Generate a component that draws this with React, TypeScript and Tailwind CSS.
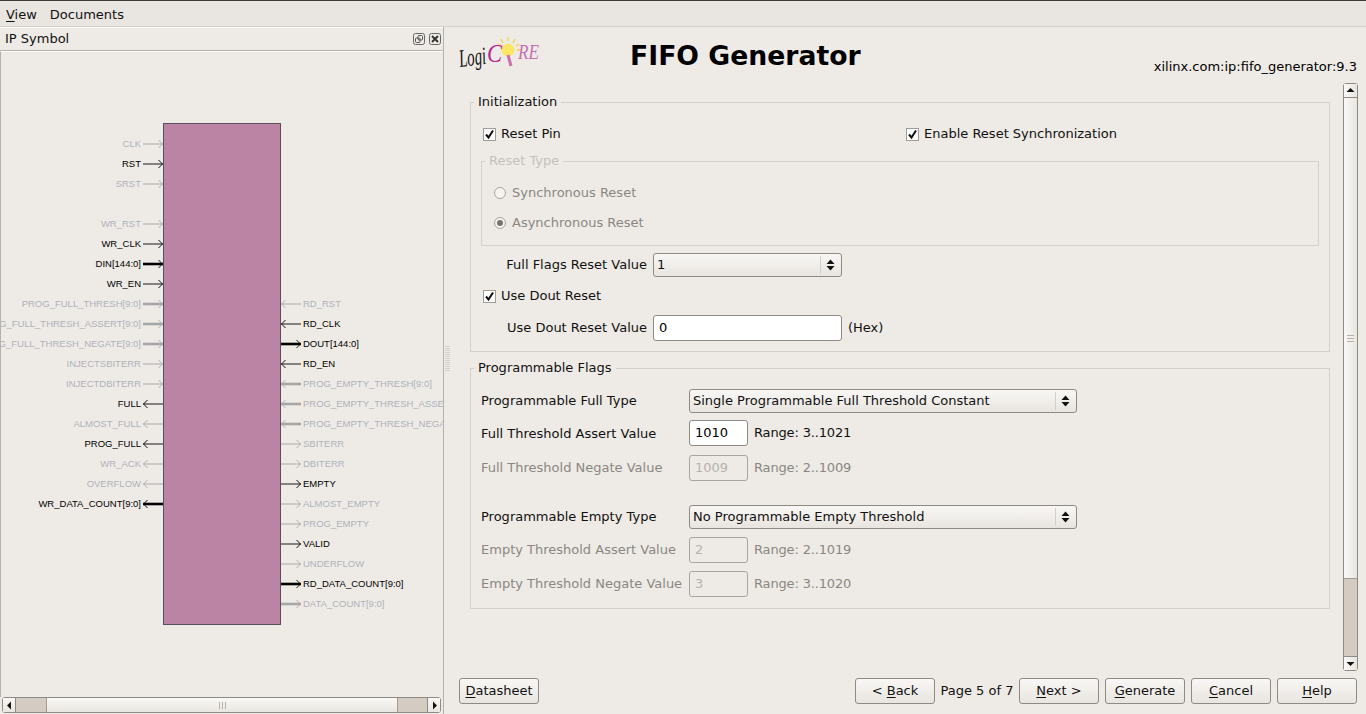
import type { ReactNode } from 'react'

type Pin = { name: string; on?: boolean; bus?: boolean; dir: 'in' | 'out' } | null

const LEFT_PINS: Pin[] = [
  { name: 'CLK', dir: 'in' },
  { name: 'RST', on: true, dir: 'in' },
  { name: 'SRST', dir: 'in' },
  null,
  { name: 'WR_RST', dir: 'in' },
  { name: 'WR_CLK', on: true, dir: 'in' },
  { name: 'DIN[144:0]', on: true, bus: true, dir: 'in' },
  { name: 'WR_EN', on: true, dir: 'in' },
  { name: 'PROG_FULL_THRESH[9:0]', bus: true, dir: 'in' },
  { name: 'PROG_FULL_THRESH_ASSERT[9:0]', bus: true, dir: 'in' },
  { name: 'PROG_FULL_THRESH_NEGATE[9:0]', bus: true, dir: 'in' },
  { name: 'INJECTSBITERR', dir: 'in' },
  { name: 'INJECTDBITERR', dir: 'in' },
  { name: 'FULL', on: true, dir: 'out' },
  { name: 'ALMOST_FULL', dir: 'out' },
  { name: 'PROG_FULL', on: true, dir: 'out' },
  { name: 'WR_ACK', dir: 'out' },
  { name: 'OVERFLOW', dir: 'out' },
  { name: 'WR_DATA_COUNT[9:0]', on: true, bus: true, dir: 'out' },
]

const RIGHT_PINS: Pin[] = [
  { name: 'RD_RST', dir: 'in' },
  { name: 'RD_CLK', on: true, dir: 'in' },
  { name: 'DOUT[144:0]', on: true, bus: true, dir: 'out' },
  { name: 'RD_EN', on: true, dir: 'in' },
  { name: 'PROG_EMPTY_THRESH[9:0]', bus: true, dir: 'in' },
  { name: 'PROG_EMPTY_THRESH_ASSERT[9:0]', bus: true, dir: 'in' },
  { name: 'PROG_EMPTY_THRESH_NEGATE[9:0]', bus: true, dir: 'in' },
  { name: 'SBITERR', dir: 'out' },
  { name: 'DBITERR', dir: 'out' },
  { name: 'EMPTY', on: true, dir: 'out' },
  { name: 'ALMOST_EMPTY', dir: 'out' },
  { name: 'PROG_EMPTY', dir: 'out' },
  { name: 'VALID', on: true, dir: 'out' },
  { name: 'UNDERFLOW', dir: 'out' },
  { name: 'RD_DATA_COUNT[9:0]', on: true, bus: true, dir: 'out' },
  { name: 'DATA_COUNT[9:0]', bus: true, dir: 'out' },
]

function PinArrow({ pin, side }: { pin: NonNullable<Pin>; side: 'left' | 'right' }) {
  const pointsRight = (side === 'left') === (pin.dir === 'in')
  const color = pin.on ? (pin.bus ? '#000000' : '#555555') : pin.bus ? '#a6a6a6' : '#bcbcbc'
  const head = pin.on ? '#111111' : '#b0b0b0'
  return (
    <svg width="20" height="10" viewBox="0 0 20 10" className="shrink-0">
      <line x1="0" y1="5" x2="20" y2="5" stroke={color} strokeWidth={pin.bus ? 2.6 : 1.4} />
      {pointsRight ? (
        <path d="M15.5 1 L19.5 5 L15.5 9" fill="none" stroke={head} strokeWidth="1" />
      ) : (
        <path d="M4.5 1 L0.5 5 L4.5 9" fill="none" stroke={head} strokeWidth="1" />
      )}
    </svg>
  )
}

function Symbol() {
  return (
    <div className="flex pt-[71px] font-['Liberation_Sans',sans-serif] text-[9.5px]">
      <div className="w-[162px] shrink-0 overflow-hidden pt-[11px]">
        {LEFT_PINS.map((pin, i) => (
          <div key={i} className="flex h-5 items-center justify-end">
            {pin && (
              <>
                <span className={`mr-[2px] whitespace-nowrap ${pin.on ? 'text-black' : 'text-[#aeb2b9]'}`}>{pin.name}</span>
                <PinArrow pin={pin} side="left" />
              </>
            )}
          </div>
        ))}
      </div>
      <div className="h-[502px] w-[118px] shrink-0 border border-[#55505a] bg-[#bb84a5]" />
      <div className="min-w-0 flex-1 overflow-hidden pt-[171px]">
        {RIGHT_PINS.map((pin, i) => (
          <div key={i} className="flex h-5 items-center">
            {pin && (
              <>
                <PinArrow pin={pin} side="right" />
                <span className={`ml-[2px] whitespace-nowrap ${pin.on ? 'text-black' : 'text-[#aeb2b9]'}`}>{pin.name}</span>
              </>
            )}
          </div>
        ))}
      </div>
    </div>
  )
}

function Triangle({ dir }: { dir: 'up' | 'down' | 'left' | 'right' }) {
  const d = {
    up: 'M0.5 6 L4.5 2 L8.5 6 Z',
    down: 'M0.5 3 L4.5 7 L8.5 3 Z',
    left: 'M6 0.5 L2 4.5 L6 8.5 Z',
    right: 'M3 0.5 L7 4.5 L3 8.5 Z',
  }[dir]
  return (
    <svg width="9" height="9" viewBox="0 0 9 9">
      <path d={d} fill="#111" />
    </svg>
  )
}

function HScrollbar() {
  return (
    <div className="mx-[2px] mb-[1px] flex h-4 w-[439px] shrink-0 rounded-[3px] border border-[#8f8a84] bg-[#d4ccc3]">
      <div className="flex w-[13px] items-center justify-center border-r border-[#8f8a84] bg-gradient-to-b from-[#faf9f7] to-[#e9e6e1]">
        <Triangle dir="left" />
      </div>
      <div className="ml-[30px] flex w-[352px] items-center justify-center gap-[2px] border-x border-[#a09b95] bg-gradient-to-b from-[#faf9f7] to-[#e9e6e1]">
        <span className="h-[7px] w-px bg-[#b5b1ab]" />
        <span className="h-[7px] w-px bg-[#b5b1ab]" />
        <span className="h-[7px] w-px bg-[#b5b1ab]" />
      </div>
      <div className="ml-auto flex w-[13px] items-center justify-center border-l border-[#8f8a84] bg-gradient-to-b from-[#faf9f7] to-[#e9e6e1]">
        <Triangle dir="right" />
      </div>
    </div>
  )
}

function VScrollbar() {
  return (
    <div className="mr-[9px] ml-[13px] flex h-[588px] w-[15px] shrink-0 flex-col rounded-[3px] border border-[#8f8a84] bg-[#d4ccc3]">
      <div className="flex h-[14px] items-center justify-center border-b border-[#8f8a84] bg-gradient-to-r from-[#faf9f7] to-[#e9e6e1]">
        <Triangle dir="up" />
      </div>
      <div className="flex h-[481px] flex-col items-center justify-center gap-[2px] border-b border-[#a09b95] bg-gradient-to-r from-[#faf9f7] to-[#e9e6e1]">
        <span className="h-px w-[7px] bg-[#b5b1ab]" />
        <span className="h-px w-[7px] bg-[#b5b1ab]" />
        <span className="h-px w-[7px] bg-[#b5b1ab]" />
      </div>
      <div className="mt-auto flex h-[14px] items-center justify-center border-t border-[#8f8a84] bg-gradient-to-r from-[#faf9f7] to-[#e9e6e1]">
        <Triangle dir="down" />
      </div>
    </div>
  )
}

function Checkbox({ label }: { label: string }) {
  return (
    <div className="flex h-5 items-center">
      <span className="flex h-[13px] w-[13px] items-center justify-center border border-[#a09c96] bg-white">
        <svg width="11" height="11" viewBox="0 0 11 11">
          <path d="M2 5.5 L4.5 8.5 L9 1.5" fill="none" stroke="#111" strokeWidth="2" />
        </svg>
      </span>
      <span className="ml-[5px]">{label}</span>
    </div>
  )
}

function Radio({ label, checked }: { label: string; checked?: boolean }) {
  return (
    <div className="flex h-5 items-center text-[#8a8782]">
      <span className="flex h-[12px] w-[12px] items-center justify-center rounded-full border border-[#a8a49e] bg-[#f6f4f1]">
        {checked && <span className="h-[6px] w-[6px] rounded-full bg-[#77746f]" />}
      </span>
      <span className="ml-[6px]">{label}</span>
    </div>
  )
}

function Combo({ value, className }: { value: string; className: string }) {
  return (
    <div className={`flex h-6 items-center rounded-[3px] border border-[#8f8a84] bg-gradient-to-b from-[#f9f7f5] to-[#e8e5e0] pl-[3px] ${className}`}>
      <span className="flex-1">{value}</span>
      <span className="h-[18px] w-px bg-[#d2cec8]" />
      <svg width="20" height="14" viewBox="0 0 20 14">
        <path d="M5.5 6 L9.5 1.5 L13.5 6 Z M5.5 8 L9.5 12.5 L13.5 8 Z" fill="#111" />
      </svg>
    </div>
  )
}

function TextBox({ value, disabled, className }: { value: string; disabled?: boolean; className: string }) {
  return (
    <div
      className={`flex h-[26px] items-center rounded-[3px] border pl-[5px] ${disabled ? 'border-[#a8a49e] bg-[#eeebe6] text-[#b5b2ad]' : 'border-[#8f8a84] bg-white text-black'} ${className}`}
    >
      {value}
    </div>
  )
}

function Group({ title, disabled, className, legendClass, children }: { title: string; disabled?: boolean; className?: string; legendClass: string; children: ReactNode }) {
  return (
    <fieldset className={`border border-[#d3d0ca] ${className ?? ''}`}>
      <legend className={`px-[4px] leading-[18px] ${legendClass} ${disabled ? 'text-[#c4c1bc]' : ''}`}>{title}</legend>
      {children}
    </fieldset>
  )
}

function ThresholdRow({ label, value, range, disabled, className }: { label: string; value: string; range: string; disabled?: boolean; className: string }) {
  return (
    <div className={`flex items-center ${className} ${disabled ? 'text-[#8a8782]' : ''}`}>
      <span className={`w-[208px] whitespace-nowrap ${disabled ? '' : 'pt-px'}`}>{label}</span>
      <TextBox value={value} disabled={disabled} className="w-[59px]" />
      <span className="ml-[6px] tracking-[-0.15px]">{range}</span>
    </div>
  )
}

function WizardButton({ mark, rest, before, className }: { mark: string; rest: string; before?: string; className?: string }) {
  return (
    <button className={`flex h-[26px] w-20 items-center justify-center rounded-[3px] border border-[#8f8a84] bg-gradient-to-b from-[#f9f7f5] to-[#e8e5e0] whitespace-pre ${className ?? ''}`}>
      {before}
      <span className="underline underline-offset-2">{mark}</span>
      {rest}
    </button>
  )
}

function Logo() {
  return (
    <svg width="84" height="38" viewBox="0 0 84 38" className="mt-[9px] ml-[8px] shrink-0">
      <path
        d="M50 1 L50 5 M43 3 L45 7 M57 3 L55 7 M40 8 L43 10 M61 8 L58 10 M63 14 L59 14"
        stroke="#f5d33c"
        strokeWidth="1.3"
      />
      <circle cx="50" cy="14" r="6.5" fill="#fbe765" />
      <path d="M50 19 L53 30" stroke="#cf6fb0" strokeWidth="3" />
      <text x="2" y="31" fontFamily="Liberation Serif, serif" fontStyle="italic" fontSize="25" fill="#111" textLength="27" lengthAdjust="spacingAndGlyphs" transform="rotate(-7 2 31)">Logi</text>
      <text x="29" y="26" fontFamily="Liberation Serif, serif" fontStyle="italic" fontSize="25" fill="#b8268f" textLength="15" lengthAdjust="spacingAndGlyphs">C</text>
      <text x="60" y="23" fontFamily="Liberation Serif, serif" fontStyle="italic" fontSize="21" fill="#c76fb5" textLength="21" lengthAdjust="spacingAndGlyphs">RE</text>
    </svg>
  )
}

export default function App() {
  return (
    <div className="flex h-[714px] w-[1366px] flex-col overflow-hidden border-t border-[#3c3c3c] bg-[#eeebe6] font-['DejaVu_Sans',sans-serif] text-[13px] text-[#111]">
      {/* Menu bar */}
      <div className="flex h-[26px] shrink-0 items-center gap-[13px] border-b border-[#d3d0ca] bg-[#e9e6e1] pt-[2px] pl-[6px]">
        <span><span className="underline underline-offset-2">V</span>iew</span>
        <span>Documents</span>
      </div>

      <div className="flex min-h-0 flex-1">
        {/* IP Symbol panel */}
        <div className="flex w-[444px] shrink-0 flex-col border-r border-[#b5b2ac]">
          <div className="flex h-[24px] shrink-0 items-center border-t border-b border-t-white border-b-[#b5b2ac] pr-[2px] pl-[5px]">
            <span className="flex-1">IP Symbol</span>
            <svg width="12" height="12" viewBox="0 0 12 12" className="mr-[4px]">
              <rect x="0.5" y="0.5" width="11" height="11" rx="2" fill="none" stroke="#666" />
              <rect x="5" y="2.5" width="4.5" height="4.5" rx="1" fill="none" stroke="#555" />
              <rect x="2.5" y="5" width="4.5" height="4.5" rx="1" fill="none" stroke="#555" />
            </svg>
            <svg width="12" height="12" viewBox="0 0 12 12">
              <rect x="0.5" y="0.5" width="11" height="11" rx="2" fill="none" stroke="#666" />
              <path d="M3 3 L9 9 M9 3 L3 9" stroke="#333" strokeWidth="2" />
            </svg>
          </div>
          <div className="min-h-0 flex-1 overflow-hidden border-t border-l border-t-white border-l-[#b5b2ac]">
            <Symbol />
          </div>
          <HScrollbar />
        </div>

        {/* Splitter */}
        <div className="flex w-[6px] shrink-0 flex-col items-center justify-center gap-px pb-[24px]">
          {Array.from({ length: 13 }, (_, i) => (
            <span key={i} className="h-px w-[5px] bg-[#d3d0ca]" />
          ))}
        </div>

        {/* Wizard page */}
        <div className="flex min-w-0 flex-1 flex-col">
          <div className="relative flex h-[56px] shrink-0">
            <Logo />
            <div className="ml-[88px] pt-[9px] text-[26.67px] leading-[40px] font-bold text-black">FIFO Generator</div>
            <div className="absolute right-[9px] bottom-[7px] text-black">xilinx.com:ip:fifo_generator:9.3</div>
          </div>

          <div className="flex">
            <div className="ml-[20px] w-[860px] shrink-0 pt-[10px]">
              <Group title="Initialization" legendClass="-ml-[7px]" className="px-[10px] pb-[10px]">
                <div className="flex pt-[13px] pl-[2px]">
                  <div className="w-[423px]"><Checkbox label="Reset Pin" /></div>
                  <Checkbox label="Enable Reset Synchronization" />
                </div>
                <Group title="Reset Type" legendClass="-ml-[9px]" disabled className="mt-[8px] px-[12px] pt-[13px] pb-[12px]">
                  <div className="flex flex-col gap-[10px]">
                    <Radio label="Synchronous Reset" />
                    <Radio label="Asynchronous Reset" checked />
                  </div>
                </Group>
                <div className="mt-[7px] flex items-center">
                  <span className="w-[172px] pr-[6px] text-right whitespace-nowrap">Full Flags Reset Value</span>
                  <Combo value="1" className="w-[189px]" />
                </div>
                <div className="mt-[9px] pl-[2px]"><Checkbox label="Use Dout Reset" /></div>
                <div className="mt-[9px] flex items-center">
                  <span className="w-[172px] pr-[6px] text-right whitespace-nowrap">Use Dout Reset Value</span>
                  <TextBox value="0" className="w-[189px]" />
                  <span className="ml-[6px]">(Hex)</span>
                </div>
              </Group>

              <Group title="Programmable Flags" legendClass="-ml-[7px]" className="mt-[7px] px-[10px] pb-[11px]">
                <div className="mt-[12px] flex items-center">
                  <span className="w-[208px]">Programmable Full Type</span>
                  <Combo value="Single Programmable Full Threshold Constant" className="w-[388px]" />
                </div>
                <ThresholdRow label="Full Threshold Assert Value" value="1010" range="Range: 3..1021" className="mt-[7px]" />
                <ThresholdRow label="Full Threshold Negate Value" value="1009" range="Range: 2..1009" disabled className="mt-[9px]" />
                <div className="mt-[24px] flex items-center">
                  <span className="w-[208px]">Programmable Empty Type</span>
                  <Combo value="No Programmable Empty Threshold" className="w-[388px]" />
                </div>
                <ThresholdRow label="Empty Threshold Assert Value" value="2" range="Range: 2..1019" disabled className="mt-[8px]" />
                <ThresholdRow label="Empty Threshold Negate Value" value="3" range="Range: 3..1020" disabled className="mt-[8px]" />
              </Group>
            </div>
            <VScrollbar />
          </div>

          <div className="flex flex-1 items-start pt-[7px] pr-[9px] pl-[9px]">
            <WizardButton mark="D" rest="atasheet" />
            <div className="ml-auto flex items-center">
              <WizardButton before="< " mark="B" rest="ack" />
              <span className="w-[84px] text-center">Page 5 of 7</span>
              <WizardButton mark="N" rest="ext >" />
              <WizardButton mark="G" rest="enerate" className="ml-[6px]" />
              <WizardButton mark="C" rest="ancel" className="ml-[6px]" />
              <WizardButton mark="H" rest="elp" className="ml-[6px]" />
            </div>
          </div>
        </div>
      </div>
    </div>
  )
}
